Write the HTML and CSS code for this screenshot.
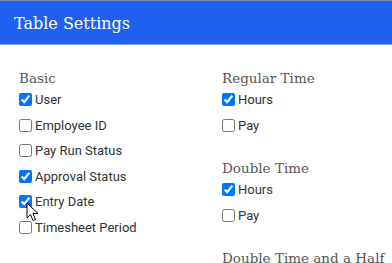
FILE: index.html
```html
<!DOCTYPE html>
<html lang="en">
<head>
  <meta charset="UTF-8" />
  <title>Table Settings</title>
  <link rel="stylesheet" href="styles.css">
</head>
<body>
  <div class="panel">
    <div class="panel-header">Table Settings</div>
    <div class="panel-body">
      <div class="column">
        <div class="group">
          <h3 class="group-title">Basic</h3>
          <label class="option"><input type="checkbox" checked> User</label>
          <label class="option"><input type="checkbox"> Employee ID</label>
          <label class="option"><input type="checkbox"> Pay Run Status</label>
          <label class="option"><input type="checkbox" checked> Approval Status</label>
          <label class="option"><input type="checkbox" checked> Entry Date
            <svg class="cursor" width="14" height="20" viewBox="0 0 14 20">
              <path d="M1 1 L1 16 L4.5 12.5 L7 18.5 L9.5 17.5 L7 11.5 L12 11.5 Z" fill="#fff" stroke="#000" stroke-width="1" stroke-linejoin="round"/>
            </svg>
          </label>
          <label class="option"><input type="checkbox"> Timesheet Period</label>
        </div>
      </div>
      <div class="column">
        <div class="group">
          <h3 class="group-title">Regular Time</h3>
          <label class="option"><input type="checkbox" checked> Hours</label>
          <label class="option"><input type="checkbox"> Pay</label>
        </div>
        <div class="group">
          <h3 class="group-title">Double Time</h3>
          <label class="option"><input type="checkbox" checked> Hours</label>
          <label class="option"><input type="checkbox"> Pay</label>
        </div>
        <div class="group">
          <h3 class="group-title">Double Time and a Half</h3>
        </div>
      </div>
    </div>
  </div>
</body>
</html>
```

FILE: styles.css
```css
body {
  margin: 0;
  background: #fff;
  font-family: Roboto, Arial, sans-serif;
  overflow: hidden;
}
.panel {
  border-top: 1px solid #7b8aa8;
}
.panel-header {
  height: 44px;
  box-sizing: border-box;
  padding: 1px 14px 0;
  display: flex;
  align-items: center;
  background: #1f60f0;
  border-bottom: 1px solid #7fa3f5;
  color: #fff;
  font-family: "DejaVu Serif", Georgia, serif;
  font-size: 16px;
}
.panel-body {
  display: grid;
  grid-template-columns: 203px 1fr;
  padding: 25px 19px 0;
}
.group {
  margin-bottom: 22px;
}
.group-title {
  margin: 0 0 1px;
  font-family: "DejaVu Serif", Georgia, serif;
  font-weight: normal;
  font-size: 13.5px;
  color: #555;
  line-height: 16px;
  white-space: nowrap;
}
.option {
  position: relative;
  display: flex;
  align-items: center;
  height: 25.5px;
  font-size: 13px;
  color: #333;
}
.option input {
  margin: 0 3px 0 0;
  width: 13px;
  height: 13px;
}
.cursor {
  position: absolute;
  left: 7px;
  top: 13px;
}
```
